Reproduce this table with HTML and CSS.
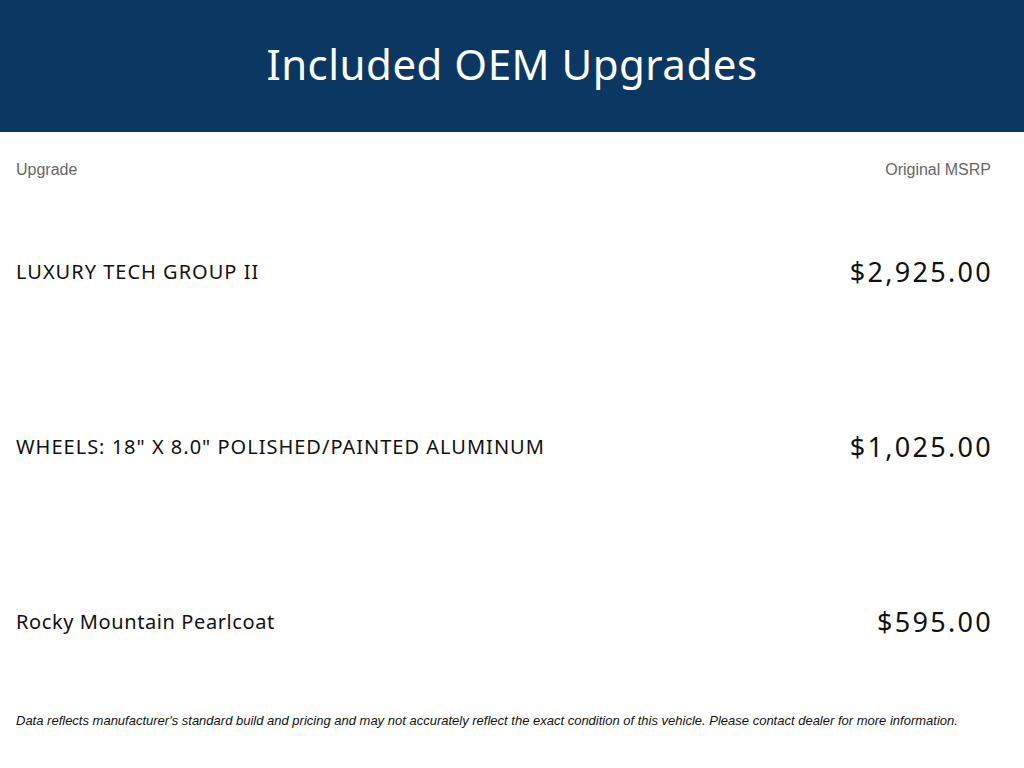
FILE: index.html
```html
<!DOCTYPE html>
<html lang="en">
<head>
<meta charset="utf-8">
<title>Included OEM Upgrades</title>
<link rel="stylesheet" href="styles.css">
</head>
<body>
<header class="banner">
  <h1 class="banner-title">Included OEM Upgrades</h1>
</header>
<main class="content">
  <div class="labels">
    <span>Upgrade</span>
    <span>Original MSRP</span>
  </div>
  <div class="row">
    <span class="name">LUXURY TECH GROUP II</span>
    <span class="price">$2,925.00</span>
  </div>
  <div class="row">
    <span class="name">WHEELS: 18" X 8.0" POLISHED/PAINTED ALUMINUM</span>
    <span class="price">$1,025.00</span>
  </div>
  <div class="row">
    <span class="name name-mixed">Rocky Mountain Pearlcoat</span>
    <span class="price">$595.00</span>
  </div>
  <p class="disclaimer">Data reflects manufacturer's standard build and pricing and may not accurately reflect the exact condition of this vehicle. Please contact dealer for more information.</p>
</main>
</body>
</html>
```

FILE: styles.css
```css
html, body {
  margin: 0;
  padding: 0;
  background: #ffffff;
}

.banner {
  height: 128px;
  padding-bottom: 4px;
  background: #0b3763;
  display: flex;
  align-items: center;
  justify-content: center;
}

.banner-title {
  margin: 0;
  color: #ffffff;
  font-family: "Noto Sans", sans-serif;
  font-weight: 400;
  font-size: 42px;
  letter-spacing: 0.5px;
  line-height: 1;
}

.content {
  padding: 0 33px 0 16px;
}

.labels {
  display: flex;
  justify-content: space-between;
  padding-top: 28px;
  height: 20px;
  line-height: 20px;
  font-family: "Liberation Sans", Arial, sans-serif;
  font-size: 16px;
  color: #666666;
}

.row {
  height: 175px;
  display: flex;
  align-items: center;
  justify-content: space-between;
  color: #111111;
  font-family: "Noto Sans", sans-serif;
}

.labels + .row {
  margin-top: 4px;
}

.name {
  font-size: 20px;
  letter-spacing: 1px;
}

.name-mixed {
  letter-spacing: 0.6px;
}

.price {
  font-size: 27px;
  letter-spacing: 2.3px;
  margin-right: -2px;
}

.disclaimer {
  margin: 4px 0 0;
  font-family: "Liberation Sans", Arial, sans-serif;
  font-style: italic;
  font-size: 13px;
  line-height: 16px;
  color: #111111;
}
```
